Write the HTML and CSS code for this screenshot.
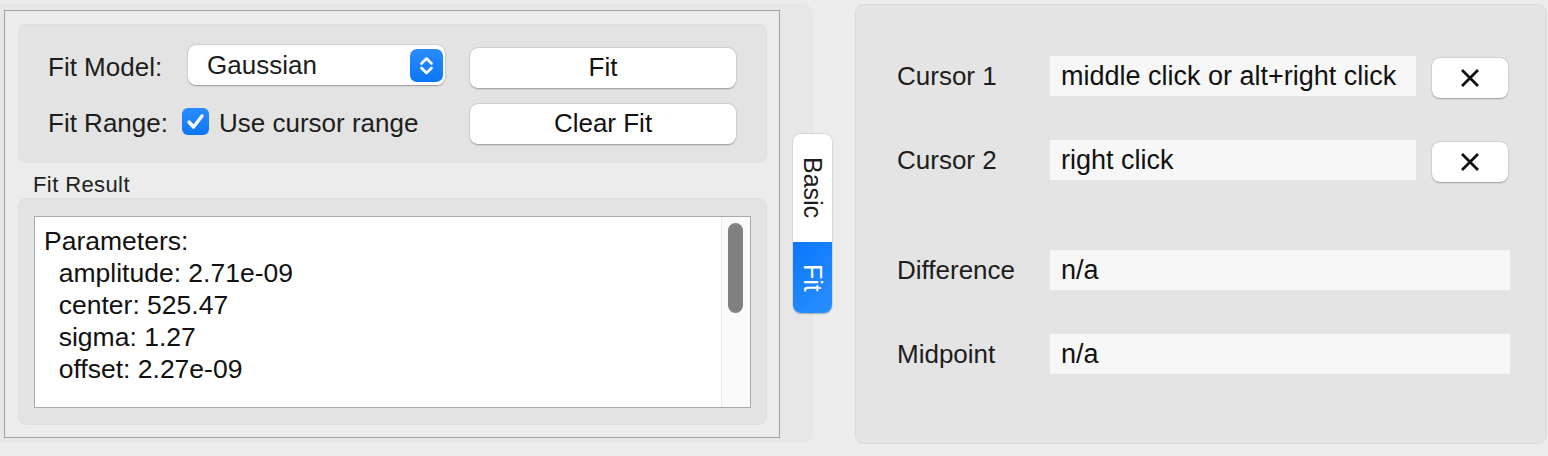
FILE: index.html
```html
<!DOCTYPE html>
<html>
<head>
<meta charset="utf-8">
<link rel="stylesheet" href="styles.css">
</head>
<body>
<div class="left-pane">
  <div class="frame">
    <div class="group fit-controls">
      <div class="label">Fit Model:</div>
      <div class="popup">
        <span class="popup-text">Gaussian</span>
        <span class="stepper">
          <svg width="33" height="33" viewBox="0 0 33 33"><path d="M11.5 14.5 L16.5 9.5 L21.5 14.5 M11.5 19 L16.5 24 L21.5 19" fill="none" stroke="#fff" stroke-width="2.6" stroke-linecap="round" stroke-linejoin="round"/></svg>
        </span>
      </div>
      <div class="btn">Fit</div>
      <div class="label">Fit Range:</div>
      <div class="check-row">
        <span class="checkbox">
          <svg width="27" height="27" viewBox="0 0 27 27"><path d="M7 14 L11.5 19 L20 8" fill="none" stroke="#fff" stroke-width="3.4" stroke-linecap="round" stroke-linejoin="round"/></svg>
        </span>
        <span class="check-text">Use cursor range</span>
      </div>
      <div class="btn">Clear Fit</div>
    </div>
    <div class="group-title">Fit Result</div>
    <div class="group result-group">
      <div class="textarea">
        <div class="text-content">Parameters:
  amplitude: 2.71e-09
  center: 525.47
  sigma: 1.27
  offset: 2.27e-09</div>
        <div class="scrollbar"><div class="thumb"></div></div>
      </div>
    </div>
  </div>
  <div class="tabs">
    <div class="tab tab-basic">Basic</div>
    <div class="tab tab-fit">Fit</div>
  </div>
</div>
<div class="right-pane">
  <div class="crow">
    <div class="clabel">Cursor 1</div>
    <div class="field field-short">middle click or alt+right click</div>
    <div class="xbtn"><svg width="20" height="20" viewBox="0 0 20 20"><path d="M2 2 L18 18 M18 2 L2 18" stroke="#111" stroke-width="2.8"/></svg></div>
  </div>
  <div class="crow row-2">
    <div class="clabel">Cursor 2</div>
    <div class="field field-short">right click</div>
    <div class="xbtn"><svg width="20" height="20" viewBox="0 0 20 20"><path d="M2 2 L18 18 M18 2 L2 18" stroke="#111" stroke-width="2.8"/></svg></div>
  </div>
  <div class="crow row-3">
    <div class="clabel">Difference</div>
    <div class="field field-long">n/a</div>
  </div>
  <div class="crow row-4">
    <div class="clabel">Midpoint</div>
    <div class="field field-long">n/a</div>
  </div>
</div>
</body>
</html>
```
FILE: styles.css
```css
* { box-sizing: border-box; }
html, body { margin: 0; padding: 0; }
body {
  width: 1548px;
  height: 456px;
  background: #ececec;
  font-family: "Liberation Sans", Arial, sans-serif;
  font-size: 26px;
  color: #1d1d1d;
  display: flex;
  align-items: flex-start;
  padding-top: 4px;
  overflow: hidden;
}
.left-pane {
  position: relative;
  width: 813px;
  height: 439px;
  background: #e7e7e7;
  border-radius: 0 9px 9px 0;
  padding: 6px 33px 5px 4px;
}
.frame {
  width: 776px;
  height: 428px;
  border: 1px solid #a3a3a3;
  background: #ececec;
  padding: 13px 12px 12px 13px;
}
.group {
  background: #e3e3e3;
  border: 1px solid #dedede;
  border-radius: 8px;
}
.fit-controls {
  height: 139px;
  display: grid;
  grid-template-columns: 134px 263px 291px;
  grid-template-rows: 40px 40px;
  column-gap: 0;
  row-gap: 16px;
  padding: 23px 30px 18px 29px;
}
.label {
  line-height: 38px;
  white-space: nowrap;
}
.popup {
  margin-left: 6px;
  margin-top: -3px;
  height: 40px;
  background: #fff;
  border-radius: 8px;
  box-shadow: 0 0.5px 1.5px rgba(0,0,0,0.3), 0 0 0 0.5px rgba(0,0,0,0.06);
  display: flex;
  align-items: center;
  justify-content: space-between;
  padding: 0 2px 0 19px;
}
.popup-text { line-height: 38px; }
.stepper {
  width: 33px;
  height: 33px;
  border-radius: 7px;
  background: linear-gradient(180deg, #2a8bff 0%, #0b77f5 100%);
  display: flex;
}
.btn {
  height: 40px;
  background: #fff;
  border-radius: 8px;
  box-shadow: 0 0.5px 1.5px rgba(0,0,0,0.3), 0 0 0 0.5px rgba(0,0,0,0.06);
  text-align: center;
  line-height: 39px;
  color: #111;
}
.fit-controls .btn { margin-left: 25px; }
.check-row {
  display: flex;
  align-items: flex-start;
  gap: 10px;
}
.checkbox {
  margin-top: 4px;
  width: 27px;
  height: 27px;
  border-radius: 6px;
  background: linear-gradient(180deg, #2a8bff 0%, #0b77f5 100%);
  display: flex;
  flex: none;
}
.check-text { line-height: 38px; white-space: nowrap; }
.group-title {
  height: 35px;
  padding: 10px 0 1px 15px;
  font-size: 22px;
  letter-spacing: 0.4px;
  line-height: 24px;
  color: #222;
}
.result-group {
  height: 227px;
  padding: 17px 15px 16px 15px;
}
.textarea {
  height: 192px;
  border: 1px solid #a9a9a9;
  background: #fff;
  display: flex;
}
.text-content {
  flex: 1;
  white-space: pre;
  padding: 8px 0 0 9px;
  font-size: 26.5px;
  line-height: 32px;
  color: #111;
}
.scrollbar {
  width: 29px;
  background: #f9f9f9;
  border-left: 1px solid #e9e9e9;
  padding: 6px 0 0 6px;
}
.thumb {
  width: 15px;
  height: 90px;
  border-radius: 8px;
  background: #808080;
}
.tabs {
  position: absolute;
  left: 793px;
  top: 130px;
  width: 39px;
  display: flex;
  flex-direction: column;
  border-radius: 8px;
  box-shadow: 0 0.5px 1.5px rgba(0,0,0,0.25), 0 0 0 0.5px rgba(0,0,0,0.06);
  overflow: hidden;
}
.tab {
  writing-mode: vertical-rl;
  font-size: 25px;
  display: flex;
  align-items: center;
  justify-content: center;
  width: 39px;
}
.tab-basic {
  height: 108px;
  background: #fff;
  color: #1d1d1d;
}
.tab-fit {
  height: 71px;
  background: linear-gradient(135deg, #0a77fb 0%, #2a8fff 100%);
  color: #fff;
}
.right-pane {
  margin-left: 42px;
  width: 692px;
  height: 440px;
  background: #e4e4e4;
  border: 1px solid #dadada;
  border-radius: 9px;
  padding: 51px 0 0 41px;
}
.crow {
  display: flex;
  align-items: flex-start;
  height: 40px;
}
.row-2 { margin-top: 44px; }
.row-3 { margin-top: 70px; }
.row-4 { margin-top: 44px; }
.clabel {
  width: 153px;
  line-height: 40px;
  white-space: nowrap;
}
.field {
  height: 40px;
  background: #f7f7f7;
  font-size: 27px;
  line-height: 40px;
  padding-left: 11px;
  white-space: nowrap;
  overflow: hidden;
  color: #111;
}
.field-short { width: 366px; }
.field-long { width: 460px; }
.xbtn {
  margin-left: 16px;
  margin-top: 2px;
  width: 76px;
  height: 40px;
  background: #fff;
  border-radius: 8px;
  box-shadow: 0 0.5px 1.5px rgba(0,0,0,0.3), 0 0 0 0.5px rgba(0,0,0,0.06);
  display: flex;
  align-items: center;
  justify-content: center;
}
```
